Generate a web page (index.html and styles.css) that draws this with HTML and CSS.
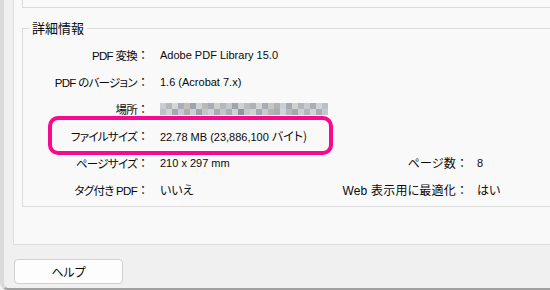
FILE: index.html
```html
<!DOCTYPE html>
<html lang="ja">
<head>
<meta charset="utf-8">
<link rel="stylesheet" href="styles.css">
</head>
<body>
<div class="window">
  <div class="panel">
    <div class="topbox"></div>
    <fieldset class="details">
      <legend>詳細情報</legend>
      <div class="grid">
        <div class="label">PDF 変換<span class="c">：</span></div>
        <div class="value wide">Adobe PDF Library 15.0</div>
        <div class="label">PDF のバージョン<span class="c">：</span></div>
        <div class="value wide">1.6 (Acrobat 7.x)</div>
        <div class="label">場所<span class="c">：</span></div>
        <div class="value wide"><span class="mosaic"></span></div>
        <div class="label">ファイルサイズ<span class="c">：</span></div>
        <div class="value wide">22.78 MB (23,886,100 <span class="ja">バイト)</span></div>
        <div class="label">ページサイズ<span class="c">：</span></div>
        <div class="value">210 x 297 mm</div>
        <div class="label right">ページ数<span class="c">：</span></div>
        <div class="value">8</div>
        <div class="label">タグ付き PDF<span class="c">：</span></div>
        <div class="value"><span class="ja">いいえ</span></div>
        <div class="label right">Web 表示用に最適化<span class="c">：</span></div>
        <div class="value"><span class="ja">はい</span></div>
      </div>
    </fieldset>
  </div>
  <button class="help">ヘルプ</button>
  <div class="highlight"></div>
</div>
</body>
</html>
```
FILE: styles.css
```css
html, body {
  margin: 0;
  padding: 0;
  width: 550px;
  height: 290px;
  overflow: hidden;
  background: #f0f0f0;
}

body {
  font-family: "Liberation Sans", "Noto Sans CJK JP", sans-serif;
  font-size: 11px;
  color: #0a0a0a;
  font-feature-settings: "palt";
}

.window {
  position: relative;
  box-sizing: border-box;
  width: 620px;
  height: 290px;
  background: #f0f0f0;
  border-left: 4px solid #dadada;
  border-bottom: 2px solid #a0a0a0;
  border-bottom-left-radius: 8px;
  padding-left: 9px;
}

.panel {
  box-sizing: border-box;
  height: 245px;
  background: #f9f9f9;
  border-left: 1px solid #dedede;
  border-bottom: 1px solid #dedede;
  padding-left: 8px;
}

.topbox {
  height: 7px;
  border-left: 1px solid #dcdcdc;
  border-bottom: 1px solid #dcdcdc;
}

.details {
  margin: 11px 0 0 0;
  padding: 4px 0 3px 0;
  border: 1px solid #dcdcdc;
  border-right: none;
  min-width: 0;
}

.details legend {
  margin-left: 6px;
  padding: 0 3px;
  font-family: "Noto Sans CJK JP", sans-serif;
  font-size: 13px;
  line-height: 18px;
  color: #0a0a0a;
}

.grid {
  display: grid;
  grid-template-columns: 137px 162px 155px auto;
  grid-auto-rows: 27px;
  align-items: center;
}

.label {
  text-align: right;
  padding-right: 11px;
  white-space: nowrap;
  font-size: 11.5px;
  letter-spacing: -0.7px;
}

.label.right {
  padding-right: 9px;
  font-size: 12px;
  letter-spacing: 0.2px;
}

.c {
  font-family: "Noto Sans CJK JP", sans-serif;
  font-feature-settings: normal;
  font-size: 12px;
  letter-spacing: 0;
}

.value {
  white-space: nowrap;
}

.value.wide {
  grid-column: span 3;
}

.ja {
  font-family: "Noto Sans CJK JP", sans-serif;
  font-size: 12px;
}

.mosaic {
  display: block;
  width: 168px;
  height: 12px;
  background:
    linear-gradient(90deg,
      #c9cdd3 0 6px, #b4b8c0 6px 12px, #d6d6d6 12px 18px, #a9adb6 18px 24px,
      #c4c0b8 24px 30px, #9ea4ae 30px 36px, #cfd2d8 36px 42px, #b8b8b8 42px 48px,
      #a7acb5 48px 54px, #d2cfc8 54px 60px, #b3b7be 60px 66px, #c6c9cf 66px 72px,
      #9fa5ae 72px 78px, #cdd0d5 78px 84px, #b9bcc2 84px 90px, #aeb2b9 90px 96px,
      #d4d4d4 96px 102px, #a8adb5 102px 108px, #c3c6cc 108px 114px, #b6b3ad 114px 120px,
      #cbcfd4 120px 126px, #a5aab3 126px 132px, #d0d0d0 132px 138px, #b2b6bd 138px 144px,
      #c7cad0 144px 150px, #a9aeb6 150px 156px, #cfd2d7 156px 162px, #bcc0c6 162px 168px)
      0 0 / 168px 6px no-repeat,
    linear-gradient(90deg,
      #bfc3c9 0 6px, #d3d3d3 6px 12px, #a3a8b1 12px 18px, #c8ccd1 18px 24px,
      #b0aea8 24px 30px, #cbced3 30px 36px, #9da3ac 36px 42px, #c2c5cb 42px 48px,
      #d1d1d1 48px 54px, #a6abb4 54px 60px, #c9c6bf 60px 66px, #aab0b8 66px 72px,
      #cfd2d7 72px 78px, #8f959f 78px 84px, #c4c7cd 84px 90px, #d2d2d2 90px 96px,
      #a4a9b2 96px 102px, #c6c9ce 102px 108px, #b7b4ae 108px 114px, #a9aeb6 114px 120px,
      #d0d3d8 120px 126px, #b4b8bf 126px 132px, #a2a7b0 132px 138px, #cccfd4 138px 144px,
      #b1b5bc 144px 150px, #d3d3d3 150px 156px, #a8adb5 156px 162px, #c5c8ce 162px 168px)
      0 6px / 168px 6px no-repeat;
}

.help {
  display: block;
  box-sizing: border-box;
  margin: 14px 0 0 1px;
  width: 109px;
  height: 25px;
  padding: 0;
  background: #fdfdfd;
  border: 1px solid #d0d0d0;
  border-radius: 4px;
  font-family: "Noto Sans CJK JP", sans-serif;
  font-feature-settings: "palt";
  font-size: 12px;
  color: #0a0a0a;
}

.highlight {
  position: absolute;
  left: 44px;
  top: 116px;
  width: 285px;
  height: 39px;
  box-sizing: border-box;
  border: 4px solid #f70a8d;
  border-radius: 10px;
}
```
